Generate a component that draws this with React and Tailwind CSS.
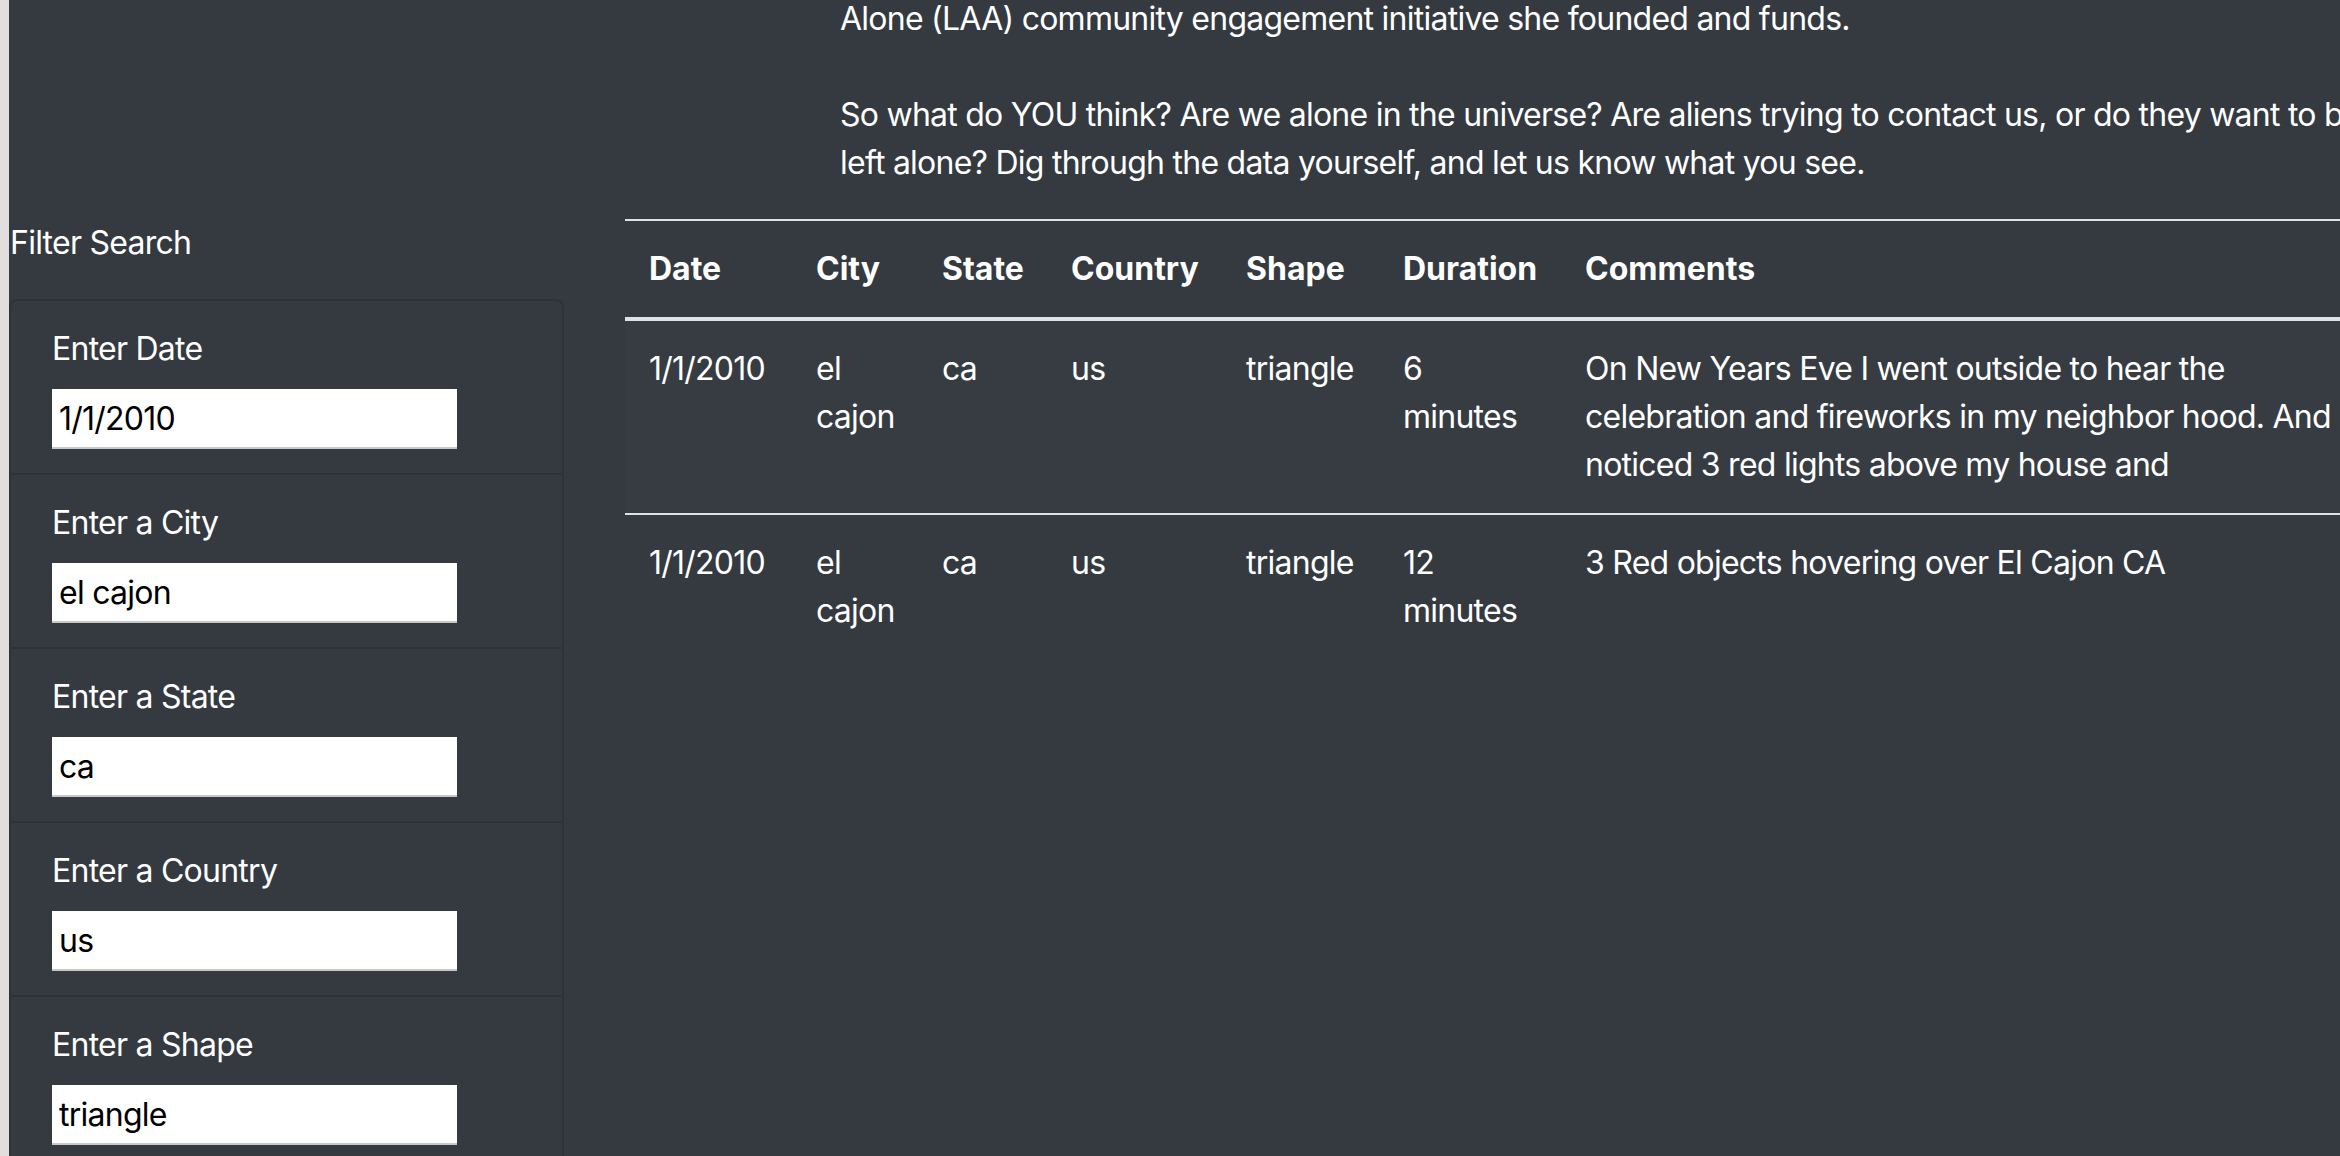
import React from "react";

const filters = [
  { label: "Enter Date", value: "1/1/2010" },
  { label: "Enter a City", value: "el cajon" },
  { label: "Enter a State", value: "ca" },
  { label: "Enter a Country", value: "us" },
  { label: "Enter a Shape", value: "triangle" },
];

const rows = [
  {
    date: "1/1/2010",
    city: "el cajon",
    state: "ca",
    country: "us",
    shape: "triangle",
    duration: "6 minutes",
    comments: [
      "On New Years Eve I went outside to hear the",
      "celebration and fireworks in my neighbor hood. And",
      "noticed 3 red lights above my house and",
    ],
  },
  {
    date: "1/1/2010",
    city: "el cajon",
    state: "ca",
    country: "us",
    shape: "triangle",
    duration: "12 minutes",
    comments: ["3 Red objects hovering over El Cajon CA"],
  },
];

export default function App() {
  return (
    <div
      className="w-[2340px] h-[1156px] overflow-hidden bg-[#343a40] text-white flex text-[32px] leading-[48px] tracking-[-0.75px]"
      style={{ fontFamily: "Inter, 'Liberation Sans', Arial, sans-serif" }}
    >
      {/* window edge strip */}
      <div className="w-[9px] shrink-0 bg-[#e2dedd]" />

      {/* sidebar */}
      <div className="w-[555px] shrink-0 pt-[219px]">
        <div className="mb-[32px] ml-[1px]">Filter Search</div>
        <div className="border-2 border-[#2e3337] rounded-[8px]">
          {filters.map((f, i) => (
            <div
              key={f.label}
              className={
                "px-[40px] pt-[24px] pb-[24px] " +
                (i > 0 ? "border-t-2 border-[#2e3337]" : "")
              }
            >
              <div className="mb-[16px] ml-[1px]">{f.label}</div>
              <input
                readOnly
                value={f.value}
                className="block ml-[1px] w-[405px] h-[60px] bg-white text-black px-[7px] border-b-2 border-[#c8c8c8] outline-none text-[32px] tracking-[-0.75px]"
              />
            </div>
          ))}
        </div>
      </div>

      {/* main */}
      <div className="ml-[61px] flex-1 min-w-0">
        <div className="ml-[215px] -mt-[5px] mb-[32px] whitespace-nowrap">
          <div>Alone (LAA) community engagement initiative she founded and funds.</div>
          <div className="h-[48px]" />
          <div>
            So what do YOU think? Are we alone in the universe? Are aliens trying to contact us, or do they want to be
          </div>
          <div>left alone? Dig through the data yourself, and let us know what you see.</div>
        </div>

        <table className="table-fixed border-collapse w-[1800px]">
          <colgroup>
            <col className="w-[167px]" />
            <col className="w-[126px]" />
            <col className="w-[129px]" />
            <col className="w-[175px]" />
            <col className="w-[157px]" />
            <col className="w-[182px]" />
            <col className="w-[864px]" />
          </colgroup>
          <thead>
            <tr className="border-t-2 border-[#dee2e6]">
              {["Date", "City", "State", "Country", "Shape", "Duration", "Comments"].map((h) => (
                <th
                  key={h}
                  className="text-left font-bold tracking-normal p-[24px] align-bottom border-b-4 border-[#dee2e6]"
                >
                  {h}
                </th>
              ))}
            </tr>
          </thead>
          <tbody>
            {rows.map((r, i) => (
              <tr
                key={i}
                className={
                  (i > 0 ? "border-t-2 border-[#dee2e6] " : "") +
                  (i % 2 === 0 ? "bg-[#373c42]" : "")
                }
              >
                <td className="p-[24px] align-top">{r.date}</td>
                <td className="p-[24px] align-top">{r.city}</td>
                <td className="p-[24px] align-top">{r.state}</td>
                <td className="p-[24px] align-top">{r.country}</td>
                <td className="p-[24px] align-top">{r.shape}</td>
                <td className="p-[24px] align-top">{r.duration}</td>
                <td className="p-[24px] align-top whitespace-nowrap">
                  {r.comments.map((c, j) => (
                    <div key={j}>{c}</div>
                  ))}
                </td>
              </tr>
            ))}
          </tbody>
        </table>
      </div>
    </div>
  );
}
